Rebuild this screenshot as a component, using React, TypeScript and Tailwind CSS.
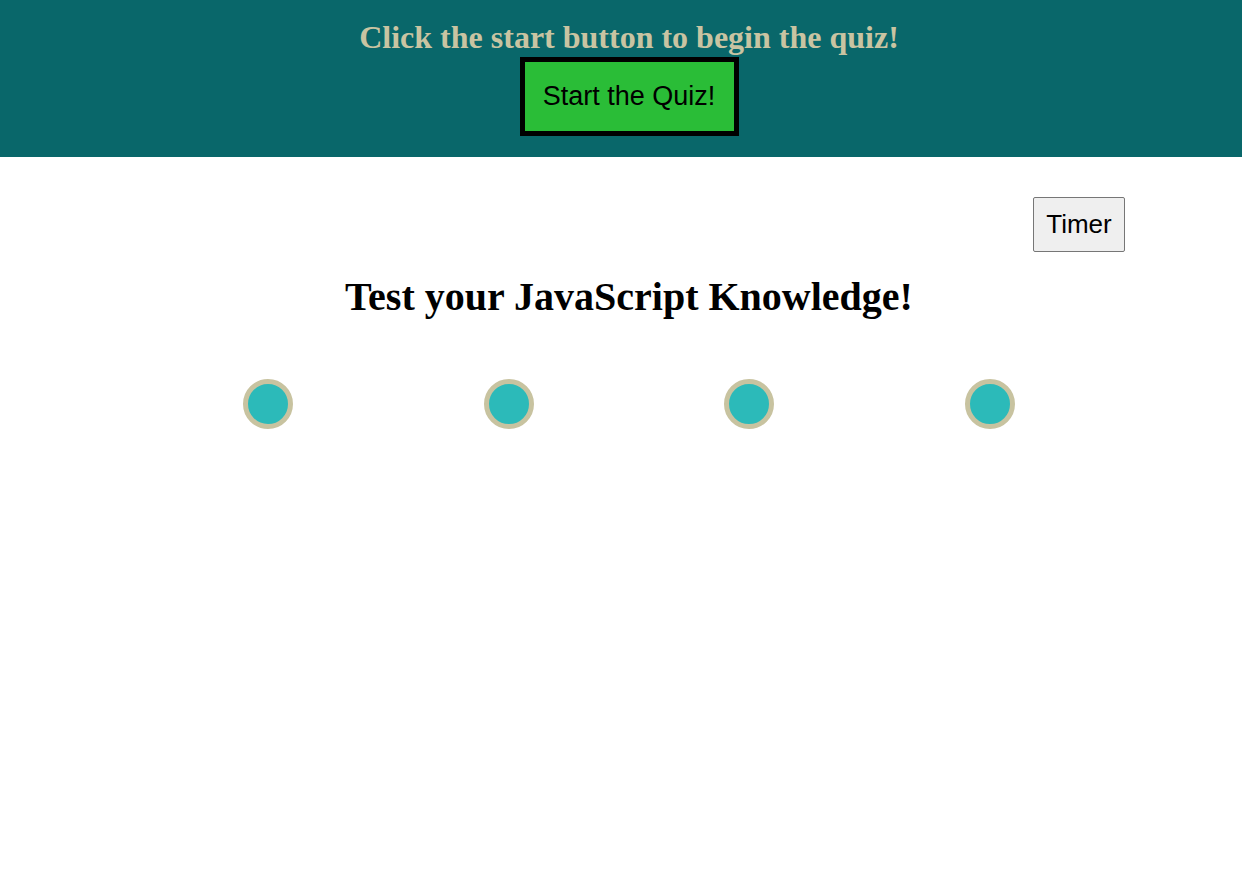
export default function App() {
  const dots = [0, 1, 2, 3];

  return (
    <div className="min-h-[886px] bg-white">
      <header className="h-[157px] bg-[#09676a] pl-4 flex flex-col items-center">
        <h2 className="mt-[19px] text-[32px] leading-[36px] font-bold text-[#c9c4a2] font-['Liberation_Serif',serif]">
          Click the start button to begin the quiz!
        </h2>
        <button className="mt-[2px] w-[219px] h-[79px] border-[5px] border-black bg-[#2abd37] text-[27px] text-black font-['Liberation_Sans',sans-serif]">
          Start the Quiz!
        </button>
      </header>

      <main className="pl-4">
        <div className="flex justify-end pr-[117px] pt-10">
          <button className="w-[92px] h-[55px] rounded-[2px] border border-[#767676] bg-[#efefef] text-[26px] text-black font-['Liberation_Sans',sans-serif]">
            Timer
          </button>
        </div>

        <h1 className="mt-[21px] text-center text-[40px] leading-[48px] font-bold text-black font-['Liberation_Serif',serif]">
          Test your JavaScript Knowledge!
        </h1>

        <div className="mx-auto mt-[58px] w-[962px] grid grid-cols-4">
          {dots.map((d) => (
            <div key={d} className="flex justify-center">
              <div className="w-[50px] h-[50px] rounded-full border-[5px] border-[#c8c3a0] bg-[#2cbab9]" />
            </div>
          ))}
        </div>
      </main>
    </div>
  );
}
